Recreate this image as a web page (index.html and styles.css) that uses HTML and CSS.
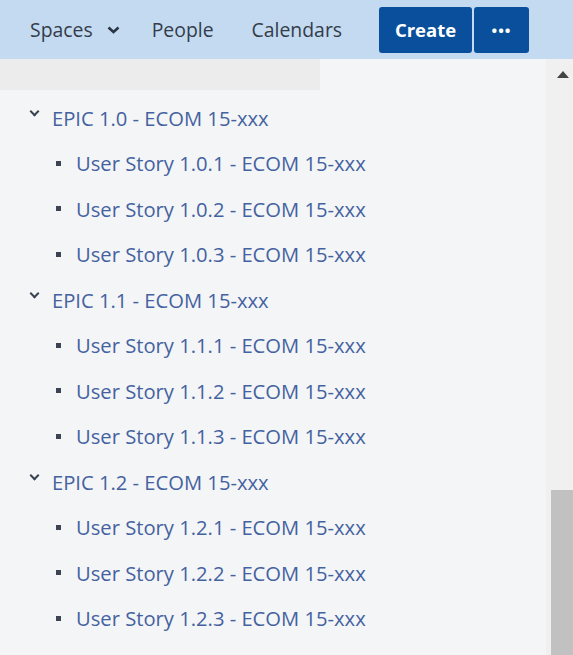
FILE: index.html
```html
<!DOCTYPE html>
<html lang="en">
<head>
  <meta charset="UTF-8" />
  <title>Page tree</title>
  <link rel="stylesheet" href="styles.css">
</head>
<body>
  <header class="top-nav">
    <a class="nav-link spaces">Spaces
      <svg class="nav-caret" width="13" height="8" viewBox="0 0 13 8"><path d="M1.5 1.5 L6.5 6 L11.5 1.5" fill="none" stroke="#2b3445" stroke-width="2.6"/></svg>
    </a>
    <a class="nav-link">People</a>
    <a class="nav-link">Calendars</a>
    <div class="nav-actions">
      <button class="btn-primary create">Create</button>
      <button class="btn-primary more">&bull;&bull;&bull;</button>
    </div>
  </header>

  <div class="main">
    <div class="content">
      <div class="search-strip"></div>

      <ul class="page-tree">
        <li class="epic">
          <div class="node"><span class="toggle"></span>EPIC 1.0 - ECOM 15-xxx</div>
          <ul>
            <li class="leaf"><span class="dot"></span>User Story 1.0.1 - ECOM 15-xxx</li>
            <li class="leaf"><span class="dot"></span>User Story 1.0.2 - ECOM 15-xxx</li>
            <li class="leaf"><span class="dot"></span>User Story 1.0.3 - ECOM 15-xxx</li>
          </ul>
        </li>
        <li class="epic">
          <div class="node"><span class="toggle"></span>EPIC 1.1 - ECOM 15-xxx</div>
          <ul>
            <li class="leaf"><span class="dot"></span>User Story 1.1.1 - ECOM 15-xxx</li>
            <li class="leaf"><span class="dot"></span>User Story 1.1.2 - ECOM 15-xxx</li>
            <li class="leaf"><span class="dot"></span>User Story 1.1.3 - ECOM 15-xxx</li>
          </ul>
        </li>
        <li class="epic">
          <div class="node"><span class="toggle"></span>EPIC 1.2 - ECOM 15-xxx</div>
          <ul>
            <li class="leaf"><span class="dot"></span>User Story 1.2.1 - ECOM 15-xxx</li>
            <li class="leaf"><span class="dot"></span>User Story 1.2.2 - ECOM 15-xxx</li>
            <li class="leaf"><span class="dot"></span>User Story 1.2.3 - ECOM 15-xxx</li>
          </ul>
        </li>
      </ul>
    </div>

    <!-- fake scrollbar, as captured -->
    <div class="scrollbar">
      <div class="scroll-up"></div>
      <div class="scroll-track"></div>
      <div class="scroll-thumb"></div>
    </div>
  </div>
</body>
</html>
```

FILE: styles.css
```css
:root {
  --header-bg: #c3daf1;
  --brand: #0a4f9b;
  --page-bg: #f4f5f7;
  --strip: #ececec;
  --link: #4462a0;
  --nav-text: #343c4a;
  --icon: #3a4252;
}

* {
  box-sizing: border-box;
  margin: 0;
  padding: 0;
}

html, body {
  height: 100%;
}

body {
  font-family: 'Open Sans', 'Liberation Sans', sans-serif;
  background: var(--page-bg);
  overflow: hidden;
  display: flex;
  flex-direction: column;
}

.top-nav {
  height: 59px;
  background: var(--header-bg);
  display: flex;
  align-items: center;
  padding-left: 30px;
  flex-shrink: 0;
}

.nav-link {
  font-size: 19.4px;
  color: var(--nav-text);
  display: flex;
  align-items: center;
  margin-right: 38px;
}

.spaces {
  margin-right: 32px;
}

.nav-caret {
  margin-left: 14px;
  margin-top: 1px;
}

.nav-actions {
  display: flex;
  gap: 2px;
  margin-left: -1px;
}

.btn-primary {
  background: var(--brand);
  color: #fff;
  border: none;
  border-radius: 3px;
  height: 46px;
  font-family: 'Open Sans', sans-serif;
  font-weight: bold;
  font-size: 18.5px;
}

.create {
  width: 93px;
}

.more {
  width: 55px;
  font-size: 15px;
  letter-spacing: 1px;
}

.main {
  flex: 1;
  display: flex;
  min-height: 0;
}

.content {
  flex: 1;
}

.search-strip {
  width: 320px;
  height: 31px;
  background: var(--strip);
}

.page-tree {
  list-style: none;
  padding-top: 5px;
}

.page-tree ul {
  list-style: none;
}

.node,
.leaf {
  height: 45.5px;
  display: flex;
  align-items: center;
  font-size: 20.2px;
  color: var(--link);
}

.node {
  padding-left: 29px;
}

.toggle {
  width: 11px;
  height: 7px;
  margin-right: 12px;
  margin-top: -6px;
  position: relative;
}

.toggle::before {
  content: "";
  position: absolute;
  left: 2px;
  top: -3px;
  width: 5px;
  height: 5px;
  border-right: 2.6px solid var(--icon);
  border-bottom: 2.6px solid var(--icon);
  transform: rotate(45deg);
}

.leaf {
  padding-left: 56px;
}

.dot {
  width: 5px;
  height: 5px;
  background: #3c4454;
  margin-right: 15px;
}

.scrollbar {
  width: 27px;
  background: #f0f0f0;
  display: flex;
  flex-direction: column;
  align-items: flex-end;
}

.scroll-up {
  width: 0;
  height: 0;
  margin: 12px 4px 0 0;
  border-left: 6px solid transparent;
  border-right: 6px solid transparent;
  border-bottom: 7px solid #444;
}

.scroll-track {
  flex: 1;
}

.scroll-thumb {
  width: 22px;
  height: 165px;
  background: #c1c1c1;
}
```
